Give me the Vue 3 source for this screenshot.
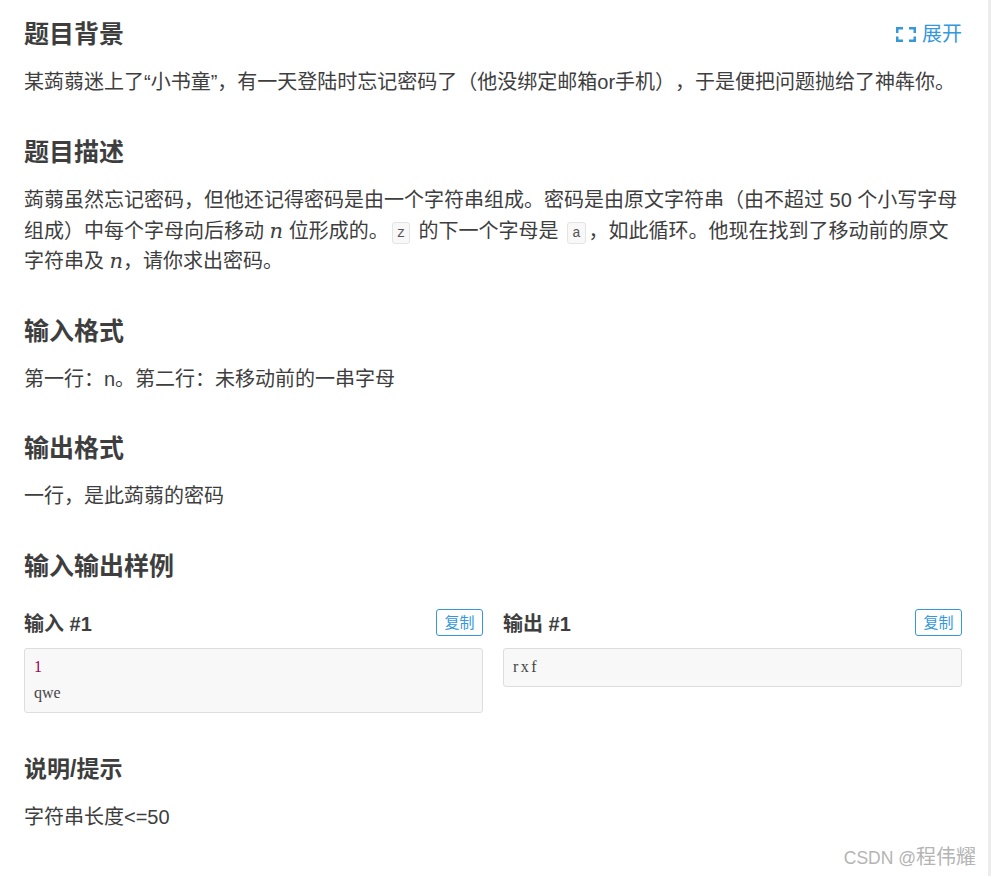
<script setup>
const icon = [
  'M7 1.25H1.25V6',
  'M13 1.25h5.75V6',
  'M18.75 9.5v4.25H13',
  'M7 13.75H1.25V9.5'
]
</script>

<template>
  <div class="page">
    <main class="main">
      <section class="section first">
        <div class="head-row">
          <h2 class="heading">题目背景</h2>
          <a class="expand">
            <svg class="expand-icon" width="20" height="15" viewBox="0 0 20 15" aria-hidden="true">
              <path v-for="d in icon" :key="d" :d="d" fill="none" stroke="#3498db" stroke-width="2.5" />
            </svg>
            <span>展开</span>
          </a>
        </div>
        <p class="para">某蒟蒻迷上了“小书童”，有一天登陆时忘记密码了（他没绑定邮箱or手机），于是便把问题抛给了神犇你。</p>
      </section>

      <section class="section">
        <h2 class="heading">题目描述</h2>
        <p class="para">蒟蒻虽然忘记密码，但他还记得密码是由一个字符串组成。密码是由原文字符串（由不超过 50 个小写字母组成）中每个字母向后移动 <i class="math">n</i> 位形成的。<code class="inline">z</code> 的下一个字母是 <code class="inline">a</code>，如此循环。他现在找到了移动前的原文字符串及 <i class="math">n</i>，请你求出密码。</p>
      </section>

      <section class="section">
        <h2 class="heading">输入格式</h2>
        <p class="para">第一行：n。第二行：未移动前的一串字母</p>
      </section>

      <section class="section">
        <h2 class="heading">输出格式</h2>
        <p class="para">一行，是此蒟蒻的密码</p>
      </section>

      <section class="section">
        <h2 class="heading">输入输出样例</h2>
        <div class="samples">
          <div class="sample">
            <div class="sample-head">
              <h3 class="sample-title">输入 #1</h3>
              <button class="copy">复制</button>
            </div>
            <pre class="code"><span class="num">1</span>
qwe</pre>
          </div>
          <div class="sample">
            <div class="sample-head">
              <h3 class="sample-title">输出 #1</h3>
              <button class="copy">复制</button>
            </div>
            <pre class="code wide">rxf</pre>
          </div>
        </div>
      </section>

      <section class="section">
        <h2 class="heading small">说明/提示</h2>
        <p class="para">字符串长度&lt;=50</p>
      </section>
    </main>
    <div class="scroll-strip"></div>
    <div class="watermark">CSDN @<span class="watermark-name">程伟耀</span></div>
  </div>
</template>

<style>
html, body { margin: 0; background: #fff; }
</style>

<style scoped>
.page {
  position: relative;
  display: flex;
  height: 876px;
  overflow: hidden;
  background: #fff;
  color: #3e3e3e;
  font-family: "Liberation Sans", "Noto Sans CJK SC", sans-serif;
}
.main {
  flex: 1;
  min-width: 0;
  padding: 19.2px 26px 0 24px;
}
.scroll-strip {
  width: 3px;
  background: #ececec;
}
.section { margin-bottom: 39px; }
.head-row {
  display: flex;
  justify-content: space-between;
  align-items: center;
}
.heading {
  margin: 0 0 18.2px;
  font-size: 25px;
  line-height: 30px;
  font-weight: 700;
}
.expand {
  display: flex;
  align-items: center;
  gap: 6px;
  margin-bottom: 18.2px;
  font-size: 20px;
  line-height: 30px;
  color: #3498db;
}
.para {
  margin: 0;
  font-size: 20px;
  line-height: 30.5px;
  text-spacing-trim: space-all;
}
.math {
  font-family: "DejaVu Serif", serif;
  font-size: 21px;
  line-height: 1;
}
.inline {
  display: inline-block;
  margin: 0 3px;
  padding: 0 4px;
  height: 20px;
  line-height: 20px;
  font-family: "Liberation Mono", monospace;
  font-size: 14px;
  color: #555;
  background: #f8f8f8;
  border: 1px solid #e4e4e4;
  border-radius: 3px;
  vertical-align: 1px;
}
.samples {
  display: grid;
  grid-template-columns: 1fr 1fr;
  gap: 20px;
  align-items: start;
  margin-top: 27.8px;
  padding-bottom: 2.4px;
}
.sample-head {
  display: flex;
  justify-content: space-between;
  align-items: flex-start;
  margin-bottom: 12px;
}
.sample-title {
  margin: 0 0 -3px;
  font-size: 20px;
  line-height: 30px;
  font-weight: 700;
}
.copy {
  width: 47px;
  height: 27px;
  padding: 0;
  font-family: inherit;
  font-size: 15px;
  line-height: 25px;
  color: #3498db;
  background: #fff;
  border: 1px solid #3498db;
  border-radius: 3px;
}
.code {
  margin: 0;
  padding: 5.5px 9px;
  font-family: "Liberation Serif", serif;
  font-size: 16px;
  line-height: 26px;
  color: #444;
  background: #f8f8f8;
  border: 1px solid #ddd;
  border-radius: 3px;
}
.wide { letter-spacing: 2.5px; }
.num { color: #905; }
.small { font-size: 23px; }
.watermark {
  position: absolute;
  right: 15px;
  top: 844px;
  font-size: 17.5px;
  line-height: 26px;
  color: #b4b4b4;
  white-space: nowrap;
}
.watermark-name { font-size: 20px; }
</style>
